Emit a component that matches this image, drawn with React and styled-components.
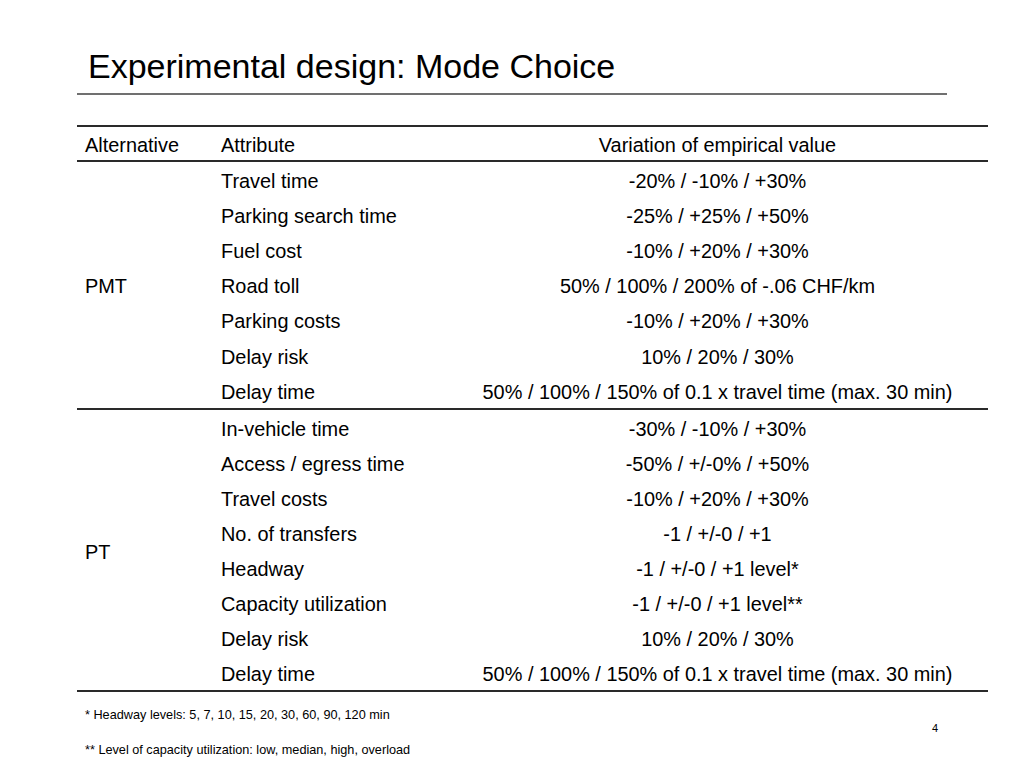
import React from 'react'
import styled, { createGlobalStyle } from 'styled-components'

const GlobalStyle = createGlobalStyle`
  html, body {
    margin: 0;
    padding: 0;
    background: #fff;
  }
  body {
    font-family: "Liberation Sans", Arial, sans-serif;
    color: #000;
  }
`

const pmtRows = [
  ['Travel time', '-20% / -10% / +30%'],
  ['Parking search time', '-25% / +25% / +50%'],
  ['Fuel cost', '-10% / +20% / +30%'],
  ['Road toll', '50% / 100% / 200% of -.06 CHF/km'],
  ['Parking costs', '-10% / +20% / +30%'],
  ['Delay risk', '10% / 20% / 30%'],
  ['Delay time', '50% / 100% / 150% of 0.1 x travel time (max. 30 min)'],
]

const ptRows = [
  ['In-vehicle time', '-30% / -10% / +30%'],
  ['Access / egress time', '-50% / +/-0% / +50%'],
  ['Travel costs', '-10% / +20% / +30%'],
  ['No. of transfers', '-1 / +/-0 / +1'],
  ['Headway', '-1 / +/-0 / +1 level*'],
  ['Capacity utilization', '-1 / +/-0 / +1 level**'],
  ['Delay risk', '10% / 20% / 30%'],
  ['Delay time', '50% / 100% / 150% of 0.1 x travel time (max. 30 min)'],
]

// one block of rows per alternative, name spans all its rows
function Group({ name, rows }) {
  return (
    <tbody>
      {rows.map((r, i) => (
        <Row key={i} $end={i === rows.length - 1}>
          {i === 0 && <GroupCell rowSpan={rows.length}>{name}</GroupCell>}
          <AttrCell>{r[0]}</AttrCell>
          <ValueCell>{r[1]}</ValueCell>
        </Row>
      ))}
    </tbody>
  )
}

export default function App() {
  return (
    <>
      <GlobalStyle />
      <Slide>
        <Title>Experimental design: Mode Choice</Title>
        <TitleRule />
        <Table>
          <thead>
            <HeadRow>
              <HeadCell>Alternative</HeadCell>
              <HeadCell>Attribute</HeadCell>
              <HeadCell $center>Variation of empirical value</HeadCell>
            </HeadRow>
          </thead>
          <Group name="PMT" rows={pmtRows} />
          <Group name="PT" rows={ptRows} />
        </Table>
        <Footer>
          <Note>* Headway levels: 5, 7, 10, 15, 20, 30, 60, 90, 120 min</Note>
          <PageNo>4</PageNo>
          <Note>** Level of capacity utilization: low, median, high, overload</Note>
        </Footer>
      </Slide>
    </>
  )
}

const Slide = styled.div`
width:1024px;
height:768px;
overflow:hidden;
padding-top:46px;
box-sizing:border-box;
display:flex;
flex-direction:column;
`
const Title = styled.h1`
margin:0 0 0 88px;
font-size:34px;
line-height:40px;
font-weight:normal;
`
const TitleRule = styled.div`
margin:7px 0 0 77px;
width:870px;
height:2px;
background:#707070;
`
const Table = styled.table`
margin:30px 0 0 77px;
width:911px;
border-collapse:collapse;
font-size:19.9px;
table-layout:fixed;
border-top:2px solid #2a2a2a;
td, th{
    padding:4px 0 0 0;
    height:31.1px;
    font-weight:normal;
    vertical-align:middle;
    white-space:nowrap;
}
`
const HeadRow = styled.tr`
border-bottom:2px solid #2a2a2a;
th{
    height:29px;
}
`
const HeadCell = styled.th`
text-align:${p => p.$center ? 'center' : 'left'};
padding-left:${p => p.$center ? '0' : '8px'} !important;
&:nth-child(1){ width:128px; }
&:nth-child(2){ width:226px; }
`
const Row = styled.tr`
border-bottom:${p => p.$end ? '2px solid #2a2a2a' : 'none'};
`
const GroupCell = styled.td`
padding-left:8px !important;
`
const AttrCell = styled.td`
padding-left:8px !important;
`
const ValueCell = styled.td`
text-align:center;
`
const Footer = styled.div`
margin:16px 0 0 85px;
width:853px;
display:flex;
flex-direction:column;
font-size:12.7px;
`
const Note = styled.div`
line-height:14px;
`
const PageNo = styled.div`
align-self:flex-end;
margin:0 0 9px;
font-size:11px;
line-height:12px;
`
